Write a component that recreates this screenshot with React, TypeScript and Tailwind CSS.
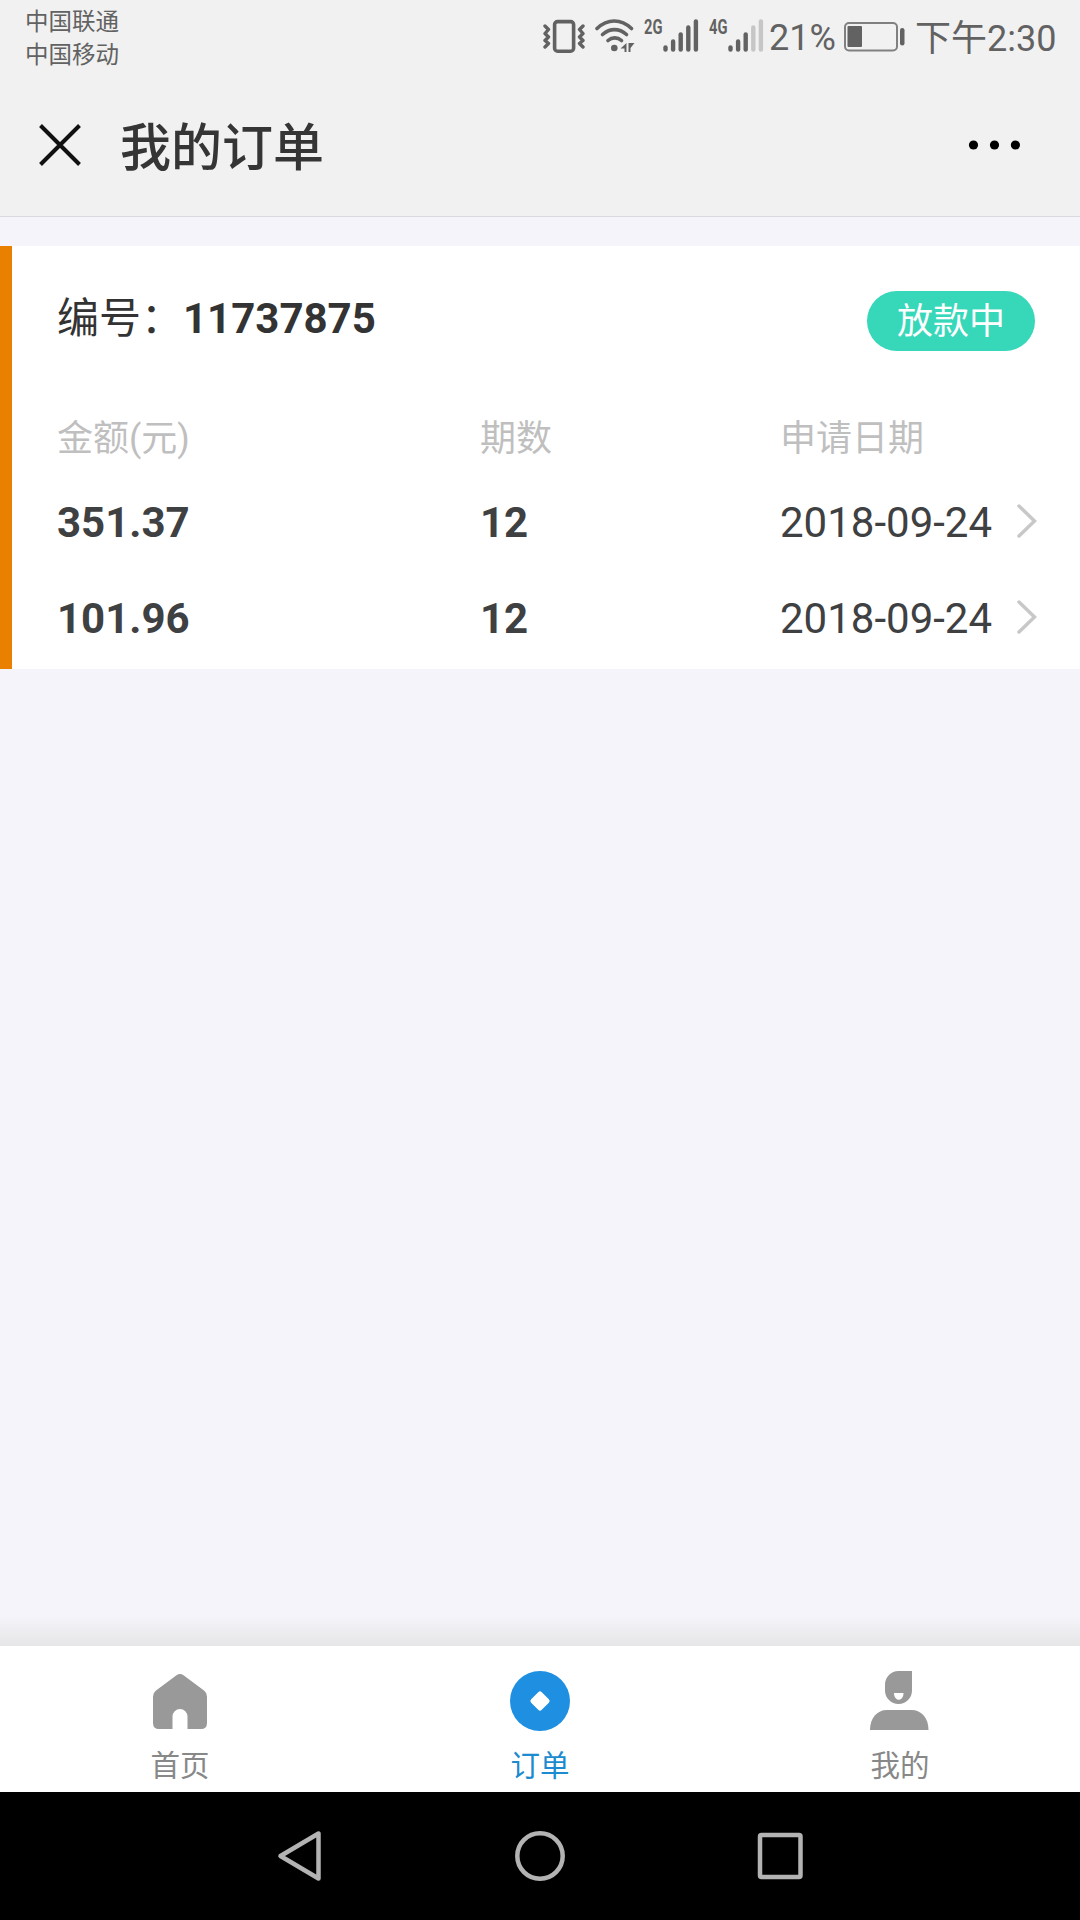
import type { ReactNode } from 'react';

interface Loan {
  amount: string;
  periods: number;
  date: string;
}

const ORDER_NO = '11737875';

const LOANS: Loan[] = [
  { amount: '351.37', periods: 12, date: '2018-09-24' },
  { amount: '101.96', periods: 12, date: '2018-09-24' },
];

function VibrateIcon() {
  return (
    <svg width="42" height="34" viewBox="0 0 42 34" fill="none" stroke="#626262" strokeLinecap="round" strokeLinejoin="round">
      <rect x="11.6" y="2.6" width="19" height="29.6" rx="3" strokeWidth="3.6" />
      <path d="M2 7l3.5 3.5-3.5 4 3.5 3.5-3.5 3.5 3.5 3L2 28" strokeWidth="3.4" />
      <path d="M40 7l-3.5 3.5 3.5 4-3.5 3.5 3.5 3.5-3.5 3L40 28" strokeWidth="3.4" />
    </svg>
  );
}

function WifiIcon() {
  return (
    <svg width="40" height="34" viewBox="0 0 40 34" fill="none" stroke="#626262" strokeWidth="3.6" strokeLinecap="round">
      <path d="M2 9.5C12.5-.5 26-.5 36.5 9.5" />
      <path d="M7.5 15.5c7.500-6.500 16.500-6.500 24 0" />
      <path d="M13 21.500c4-3.500 9.500-3.500 13.500 0" />
      <circle cx="19.3" cy="29" r="3.3" fill="#626262" stroke="none" />
      <path d="M31.500 24v9h-2v-3.500h-4zM33.500 24h6l-4 5v4h-2z" fill="#626262" stroke="none" />
    </svg>
  );
}

function Signal({ label, level }: { label: string; level: number }) {
  return (
    <div className="flex h-[34px] items-start">
      <span className="w-[19px] origin-left scale-x-[0.7] text-[21px] leading-[16px] font-bold text-[#626262]">{label}</span>
      <svg width="36" height="34" viewBox="0 0 36 34" strokeWidth="4.4" strokeLinecap="round">
        {[28.5, 22.5, 15.5, 8.5, 2.5].map((top, i) => (
          <path key={top} d={`M${2.5 + i * 7.6} ${top}V30.5`} stroke={i < level ? '#626262' : '#c6c6c6'} />
        ))}
      </svg>
    </div>
  );
}

function BatteryIcon() {
  return (
    <svg width="61" height="30" viewBox="0 0 61 30">
      <rect x="1" y="1" width="52" height="27.5" rx="4" fill="none" stroke="#808080" strokeWidth="2" />
      <rect x="3.5" y="4" width="14.5" height="21" rx="1" fill="#626262" />
      <rect x="56" y="6" width="4.5" height="17.5" rx="2.2" fill="#626262" />
    </svg>
  );
}

function StatusBar() {
  return (
    <div className="flex h-[72px] justify-between pl-[25px] pr-6 text-[#626262]">
      <div className="pt-[6px] text-[23.5px] leading-[33px]">
        <p>中国联通</p>
        <p>中国移动</p>
      </div>
      <div className="flex items-start pt-[19px]">
        <VibrateIcon />
        <div className="ml-[10px]"><WifiIcon /></div>
        <div className="ml-[9px]"><Signal label="2G" level={5} /></div>
        <div className="ml-[10px]"><Signal label="4G" level={3} /></div>
        <span className="ml-[5px] w-[65px] pt-px text-[36px] leading-[36px]">21%</span>
        <div className="ml-[10px] mt-[3px]"><BatteryIcon /></div>
        <span className="ml-[10px] w-[141px] whitespace-nowrap pt-[2px] text-[36px] leading-[36px]">下午2:30</span>
      </div>
    </div>
  );
}

function TitleBar() {
  return (
    <header className="flex h-[145px] items-center border-b border-[#d9d9e0] pl-[39px] pr-[60px] pt-[2px]">
      <svg width="42" height="42" viewBox="0 0 42 42" stroke="#111" strokeWidth="4">
        <path d="M1.500 1.500l39 39M40.500 1.500l-39 39" />
      </svg>
      <h1 className="ml-[39px] flex-1 pt-[8px] text-[51px] leading-[60px] font-medium text-[#353535]">我的订单</h1>
      <svg width="52" height="10" viewBox="0 0 52 10">
        <circle cx="5.5" cy="5" r="4.6" />
        <circle cx="26.5" cy="5" r="4.6" />
        <circle cx="47.400" cy="5" r="4.6" />
      </svg>
    </header>
  );
}

function OrderCard() {
  return (
    <section className="mt-[29px] h-[423px] border-l-[12px] border-[#e98000] bg-white px-[45px]">
      <div className="flex h-[150px] items-center justify-between">
        <p className="mb-1 text-[42px] leading-[50px] text-[#333]">
          编号：<span className="font-bold">{ORDER_NO}</span>
        </p>
        <span className="flex h-[60px] w-[168px] items-center justify-center rounded-full bg-[#37d7b9] pt-[2px] text-[36px] leading-none text-white">
          放款中
        </span>
      </div>
      <div className="grid h-[79px] grid-cols-[423px_300px_1fr] items-center pt-[7px] text-[36px] leading-[50px] text-[#bfbfbf]">
        <span>金额(元)</span>
        <span>期数</span>
        <span>申请日期</span>
      </div>
      {LOANS.map((loan) => (
        <div key={loan.amount} className="grid h-24 grid-cols-[423px_300px_1fr] items-center text-[42px] leading-[50px] text-[#3e4042]">
          <span className="font-bold">{loan.amount}</span>
          <span className="font-bold">{loan.periods}</span>
          <span className="flex items-center justify-between">
            {loan.date}
            <svg className="-mt-[5px] -mr-[2px]" width="21" height="34" viewBox="0 0 21 34" fill="none" stroke="#c8c8c8" strokeWidth="3.5" strokeLinecap="round">
              <path d="M3 2l15.500 15L3 32" />
            </svg>
          </span>
        </div>
      ))}
    </section>
  );
}

function HomeIcon() {
  return (
    <svg width="60" height="60" viewBox="0 0 60 60" fill="#999">
      <path d="M26.500 4.200q3.500-2.500 7 0L54 19.500q3 2.300 3 6V52q0 6-6 6H37.500V45.500a7.500 7.500 0 0 0-15 0V58H9q-6 0-6-6V25.500q0-3.700 3-6z" />
    </svg>
  );
}

function OrderIcon() {
  return (
    <svg width="60" height="60" viewBox="0 0 60 60">
      <circle cx="30" cy="30" r="30" fill="#1f8fe2" />
      <rect x="22.5" y="22.5" width="15" height="15" rx="2.5" fill="#fff" transform="rotate(45 30 30)" />
    </svg>
  );
}

function UserIcon() {
  return (
    <svg width="60" height="60" viewBox="0 0 60 60" fill="#999">
      <path d="M28.500 0H42v19.500a13.500 13.500 0 0 1-27 0v-6A13.500 13.500 0 0 1 28.500 0z" />
      <path d="M24 22h9.500c0 9-9.500 9-9.500 0z" fill="#fff" />
      <path d="M0 59C0 47 7 39 17 39h24.500C51.500 39 58.500 47 58.500 59z" />
    </svg>
  );
}

function Tab({ label, active, children }: { label: string; active?: boolean; children: ReactNode }) {
  return (
    <button className={`flex flex-1 flex-col items-center pt-[25px] text-[29.5px] leading-[40px] ${active ? 'text-[#1c8bcf]' : 'text-[#888]'}`}>
      {children}
      <span className="mt-[15px]">{label}</span>
    </button>
  );
}

export default function App() {
  return (
    <div className="flex h-[1920px] w-[1080px] flex-col overflow-hidden bg-[#f4f4fa] font-['Roboto','Noto_Sans_CJK_SC',sans-serif]">
      <div className="bg-[#f1f1f1]">
        <StatusBar />
        <TitleBar />
      </div>
      <main className="flex-1">
        <OrderCard />
      </main>

      {/* Tabs */}
      <div className="h-[30px] bg-linear-to-b from-[#f4f4fa] to-[#e6e6e8]" />
      <nav className="flex h-[146px] bg-white">
        <Tab label="首页"><HomeIcon /></Tab>
        <Tab label="订单" active><OrderIcon /></Tab>
        <Tab label="我的"><UserIcon /></Tab>
      </nav>

      {/* System keys */}
      <div className="flex h-32 items-center justify-center bg-black">
        <svg width="560" height="60" viewBox="0 0 560 60" fill="none" stroke="#b3b3b3" strokeWidth="4.5" strokeLinejoin="round">
          <path d="M58.500 7.500v45L20.500 30z" />
          <circle cx="280" cy="30" r="22.7" />
          <rect x="500" y="9" width="40.5" height="42" rx="1.5" />
        </svg>
      </div>
    </div>
  );
}
